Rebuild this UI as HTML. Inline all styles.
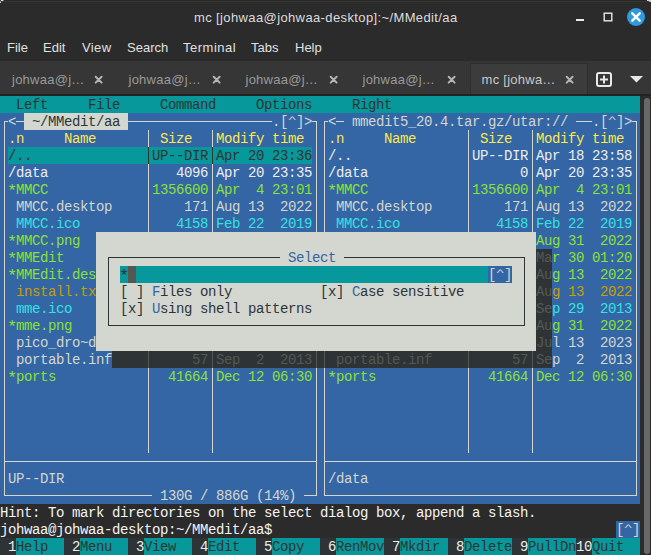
<!DOCTYPE html>
<html><head><meta charset="utf-8"><style>
html,body{margin:0;padding:0;width:651px;height:555px;overflow:hidden;background:#2b2b2b;position:relative}
.t{position:absolute;height:17px;line-height:17px;font-family:"Liberation Mono",monospace;font-size:14.0px;letter-spacing:-0.401px;white-space:pre;overflow:visible}
.l{position:absolute}
.c{display:inline-block;width:8px;transform-origin:50% 4px;transform:scale(1.05,0.5)}
.a{display:inline-block;width:8px;transform:translateY(1.6px) scale(1.22)}
.ui{position:absolute;font-family:"Liberation Sans",sans-serif;font-size:13px;white-space:pre;line-height:16px}
</style></head><body>

<div style="position:absolute;left:0;top:0;width:651px;height:61px;background:#2b2b2b"></div><div style="position:absolute;left:0;top:0;width:651px;height:1px;background:#292825"></div><div style="position:absolute;left:0;top:1px;width:651px;height:1px;background:#363636"></div><div style="position:absolute;left:0;top:0;width:2px;height:1px;background:#30305a"></div><div style="position:absolute;left:1px;top:0;width:2px;height:1px;background:#d8f0f8"></div><div style="position:absolute;left:3px;top:0;width:1px;height:1px;background:#a06030"></div><div style="position:absolute;left:0;top:1px;width:1px;height:1px;background:#c08050"></div><div style="position:absolute;left:0;top:2px;width:1px;height:1px;background:#d0d0d0"></div><div style="position:absolute;left:647px;top:0;width:4px;height:1px;background:#d8d0c0"></div><div style="position:absolute;left:649px;top:1px;width:2px;height:1px;background:#c0b8a8"></div>
<div class="ui" style="left:194px;top:10px;color:#dcdcdc;letter-spacing:0.38px">mc [johwaa@johwaa-desktop]:~/MMedit/aa</div>
<div style="position:absolute;left:576px;top:19px;width:8px;height:2px;background:#e8e8e8"></div>
<svg style="position:absolute;left:602px;top:11px" width="12" height="12"><rect x="2.2" y="2.2" width="7.6" height="7.6" fill="none" stroke="#e8e8e8" stroke-width="1.4"/></svg>
<div style="position:absolute;left:627px;top:8px;width:18px;height:18px;border-radius:50%;background:#2f9ade"></div>
<svg style="position:absolute;left:627px;top:8px" width="18" height="18"><path d="M5.3 5.3 L12.7 12.7 M12.7 5.3 L5.3 12.7" stroke="#fff" stroke-width="2.4" stroke-linecap="round"/></svg>
<div class="ui" style="left:7px;top:40px;color:#e0e0e0">File</div>
<div class="ui" style="left:43px;top:40px;color:#e0e0e0">Edit</div>
<div class="ui" style="left:82px;top:40px;color:#e0e0e0;letter-spacing:0.4px">View</div>
<div class="ui" style="left:127px;top:40px;color:#e0e0e0">Search</div>
<div class="ui" style="left:183px;top:40px;color:#e0e0e0;letter-spacing:0.5px">Terminal</div>
<div class="ui" style="left:251px;top:40px;color:#e0e0e0">Tabs</div>
<div class="ui" style="left:295px;top:40px;color:#e0e0e0">Help</div>
<div style="position:absolute;left:0;top:61px;width:651px;height:33px;background:#363636"></div>
<div style="position:absolute;left:470px;top:63px;width:118px;height:31px;background:#3c3c3c;border:1px solid #2e2e2e;border-bottom:none;box-sizing:border-box"></div>
<div style="position:absolute;left:0;top:94px;width:651px;height:2px;background:#232323"></div>
<div style="position:absolute;left:640px;top:96px;width:11px;height:459px;background:#2b2b2b"></div>
<div style="position:absolute;left:644px;top:98px;width:6px;height:456px;border-radius:3px;background:#686868"></div>

<div class="ui" style="left:12.0px;top:72px;color:#9a9a9a;letter-spacing:0.25px">johwaa@j…</div><svg style="position:absolute;left:94.2px;top:74.5px" width="10" height="10"><path d="M1.7 1.7 L7.6 7.6 M7.6 1.7 L1.7 7.6" stroke="#b4b4b4" stroke-width="2" stroke-linecap="round"/></svg><div class="ui" style="left:128.5px;top:72px;color:#9a9a9a;letter-spacing:0.25px">johwaa@j…</div><svg style="position:absolute;left:211.8px;top:74.5px" width="10" height="10"><path d="M1.7 1.7 L7.6 7.6 M7.6 1.7 L1.7 7.6" stroke="#b4b4b4" stroke-width="2" stroke-linecap="round"/></svg><div class="ui" style="left:245.5px;top:72px;color:#9a9a9a;letter-spacing:0.25px">johwaa@j…</div><svg style="position:absolute;left:329.4px;top:74.5px" width="10" height="10"><path d="M1.7 1.7 L7.6 7.6 M7.6 1.7 L1.7 7.6" stroke="#b4b4b4" stroke-width="2" stroke-linecap="round"/></svg><div class="ui" style="left:362.5px;top:72px;color:#9a9a9a;letter-spacing:0.25px">johwaa@j…</div><svg style="position:absolute;left:447.0px;top:74.5px" width="10" height="10"><path d="M1.7 1.7 L7.6 7.6 M7.6 1.7 L1.7 7.6" stroke="#b4b4b4" stroke-width="2" stroke-linecap="round"/></svg><div class="ui" style="left:481.6px;top:72px;color:#c8c8c8;letter-spacing:0.25px">mc [johwa…</div><svg style="position:absolute;left:564.6px;top:74.5px" width="10" height="10"><path d="M1.7 1.7 L7.6 7.6 M7.6 1.7 L1.7 7.6" stroke="#b4b4b4" stroke-width="2" stroke-linecap="round"/></svg><div style="position:absolute;left:596px;top:72px;width:12px;height:11px;border:2px solid #e8e8e8;border-radius:3px"></div><svg style="position:absolute;left:596px;top:72px" width="16" height="15"><path d="M8 3.5 V11.5 M4 7.5 H12" stroke="#e8e8e8" stroke-width="2"/></svg><svg style="position:absolute;left:630px;top:76px" width="13" height="7"><path d="M0 0 H13 L6.5 6.5 Z" fill="#e8e8e8"/></svg>
<div style="position:absolute;left:0;top:96px;width:640px;height:459px;background:#2b2b2b"></div>
<div class="t" style="left:0px;top:96px;width:640px;background:#06989a;color:#2e3436"><span style="position:relative;top:1.0px">  Left     File     Command     Options     Right</span></div>
<div class="t" style="left:0px;top:113px;width:24px;background:#3465a4;color:#d3d7cf"><span style="position:relative;top:1.0px"> &lt;</span></div>
<div class="t" style="left:24px;top:113px;width:104px;background:#d3d7cf;color:#2e3436"><span style="position:relative;top:1.0px"> ~/MMedit/aa</span></div>
<div class="t" style="left:128px;top:113px;width:512px;background:#3465a4;color:#d3d7cf"><span style="position:relative;top:1.0px">                  .[<span class="c">^</span>]&gt;  &lt;  mmedit5_20.4.tar.gz/utar://   .[<span class="c">^</span>]&gt;</span></div>
<div class="t" style="left:0px;top:130px;width:8px;background:#3465a4;color:#d3d7cf"></div>
<div class="t" style="left:8px;top:130px;width:16px;background:#3465a4;color:#fce94f"><span style="position:relative;top:1.0px">.n</span></div>
<div class="t" style="left:24px;top:130px;width:40px;background:#3465a4;color:#d3d7cf"></div>
<div class="t" style="left:64px;top:130px;width:32px;background:#3465a4;color:#fce94f"><span style="position:relative;top:1.0px">Name</span></div>
<div class="t" style="left:96px;top:130px;width:64px;background:#3465a4;color:#d3d7cf"></div>
<div class="t" style="left:160px;top:130px;width:32px;background:#3465a4;color:#fce94f"><span style="position:relative;top:1.0px">Size</span></div>
<div class="t" style="left:192px;top:130px;width:24px;background:#3465a4;color:#d3d7cf"></div>
<div class="t" style="left:216px;top:130px;width:88px;background:#3465a4;color:#fce94f"><span style="position:relative;top:1.0px">Modify time</span></div>
<div class="t" style="left:304px;top:130px;width:24px;background:#3465a4;color:#d3d7cf"></div>
<div class="t" style="left:328px;top:130px;width:16px;background:#3465a4;color:#fce94f"><span style="position:relative;top:1.0px">.n</span></div>
<div class="t" style="left:344px;top:130px;width:40px;background:#3465a4;color:#d3d7cf"></div>
<div class="t" style="left:384px;top:130px;width:32px;background:#3465a4;color:#fce94f"><span style="position:relative;top:1.0px">Name</span></div>
<div class="t" style="left:416px;top:130px;width:64px;background:#3465a4;color:#d3d7cf"></div>
<div class="t" style="left:480px;top:130px;width:32px;background:#3465a4;color:#fce94f"><span style="position:relative;top:1.0px">Size</span></div>
<div class="t" style="left:512px;top:130px;width:24px;background:#3465a4;color:#d3d7cf"></div>
<div class="t" style="left:536px;top:130px;width:88px;background:#3465a4;color:#fce94f"><span style="position:relative;top:1.0px">Modify time</span></div>
<div class="t" style="left:624px;top:130px;width:16px;background:#3465a4;color:#d3d7cf"></div>
<div class="t" style="left:0px;top:147px;width:8px;background:#3465a4;color:#d3d7cf"></div>
<div class="t" style="left:8px;top:147px;width:304px;background:#06989a;color:#2e3436"><span style="position:relative;top:1.0px">/..               UP--DIR Apr 20 23:36</span></div>
<div class="t" style="left:312px;top:147px;width:16px;background:#3465a4;color:#d3d7cf"></div>
<div class="t" style="left:328px;top:147px;width:136px;background:#3465a4;color:#eeeeec"><span style="position:relative;top:1.0px">/..</span></div>
<div class="t" style="left:464px;top:147px;width:8px;background:#3465a4;color:#d3d7cf"></div>
<div class="t" style="left:472px;top:147px;width:56px;background:#3465a4;color:#eeeeec"><span style="position:relative;top:1.0px">UP--DIR</span></div>
<div class="t" style="left:528px;top:147px;width:8px;background:#3465a4;color:#d3d7cf"></div>
<div class="t" style="left:536px;top:147px;width:96px;background:#3465a4;color:#eeeeec"><span style="position:relative;top:1.0px">Apr 18 23:58</span></div>
<div class="t" style="left:632px;top:147px;width:8px;background:#3465a4;color:#d3d7cf"></div>
<div class="t" style="left:0px;top:164px;width:8px;background:#3465a4;color:#d3d7cf"></div>
<div class="t" style="left:8px;top:164px;width:136px;background:#3465a4;color:#eeeeec"><span style="position:relative;top:1.0px">/data</span></div>
<div class="t" style="left:144px;top:164px;width:8px;background:#3465a4;color:#d3d7cf"></div>
<div class="t" style="left:152px;top:164px;width:56px;background:#3465a4;color:#eeeeec"><span style="position:relative;top:1.0px">   4096</span></div>
<div class="t" style="left:208px;top:164px;width:8px;background:#3465a4;color:#d3d7cf"></div>
<div class="t" style="left:216px;top:164px;width:96px;background:#3465a4;color:#eeeeec"><span style="position:relative;top:1.0px">Apr 20 23:35</span></div>
<div class="t" style="left:312px;top:164px;width:16px;background:#3465a4;color:#d3d7cf"></div>
<div class="t" style="left:328px;top:164px;width:136px;background:#3465a4;color:#eeeeec"><span style="position:relative;top:1.0px">/data</span></div>
<div class="t" style="left:464px;top:164px;width:8px;background:#3465a4;color:#d3d7cf"></div>
<div class="t" style="left:472px;top:164px;width:56px;background:#3465a4;color:#eeeeec"><span style="position:relative;top:1.0px">      0</span></div>
<div class="t" style="left:528px;top:164px;width:8px;background:#3465a4;color:#d3d7cf"></div>
<div class="t" style="left:536px;top:164px;width:96px;background:#3465a4;color:#eeeeec"><span style="position:relative;top:1.0px">Apr 20 23:35</span></div>
<div class="t" style="left:632px;top:164px;width:8px;background:#3465a4;color:#d3d7cf"></div>
<div class="t" style="left:0px;top:181px;width:8px;background:#3465a4;color:#d3d7cf"></div>
<div class="t" style="left:8px;top:181px;width:136px;background:#3465a4;color:#8ae234"><span style="position:relative;top:1.0px"><span class="a">*</span>MMCC</span></div>
<div class="t" style="left:144px;top:181px;width:8px;background:#3465a4;color:#d3d7cf"></div>
<div class="t" style="left:152px;top:181px;width:56px;background:#3465a4;color:#8ae234"><span style="position:relative;top:1.0px">1356600</span></div>
<div class="t" style="left:208px;top:181px;width:8px;background:#3465a4;color:#d3d7cf"></div>
<div class="t" style="left:216px;top:181px;width:96px;background:#3465a4;color:#8ae234"><span style="position:relative;top:1.0px">Apr  4 23:01</span></div>
<div class="t" style="left:312px;top:181px;width:16px;background:#3465a4;color:#d3d7cf"></div>
<div class="t" style="left:328px;top:181px;width:136px;background:#3465a4;color:#8ae234"><span style="position:relative;top:1.0px"><span class="a">*</span>MMCC</span></div>
<div class="t" style="left:464px;top:181px;width:8px;background:#3465a4;color:#d3d7cf"></div>
<div class="t" style="left:472px;top:181px;width:56px;background:#3465a4;color:#8ae234"><span style="position:relative;top:1.0px">1356600</span></div>
<div class="t" style="left:528px;top:181px;width:8px;background:#3465a4;color:#d3d7cf"></div>
<div class="t" style="left:536px;top:181px;width:96px;background:#3465a4;color:#8ae234"><span style="position:relative;top:1.0px">Apr  4 23:01</span></div>
<div class="t" style="left:632px;top:181px;width:8px;background:#3465a4;color:#d3d7cf"></div>
<div class="t" style="left:0px;top:198px;width:640px;background:#3465a4;color:#d3d7cf"><span style="position:relative;top:1.0px">  MMCC.desktop         171 Aug 13  2022   MMCC.desktop         171 Aug 13  2022</span></div>
<div class="t" style="left:0px;top:215px;width:8px;background:#3465a4;color:#d3d7cf"></div>
<div class="t" style="left:8px;top:215px;width:136px;background:#3465a4;color:#34e2e2"><span style="position:relative;top:1.0px"> MMCC.ico</span></div>
<div class="t" style="left:144px;top:215px;width:8px;background:#3465a4;color:#d3d7cf"></div>
<div class="t" style="left:152px;top:215px;width:56px;background:#3465a4;color:#34e2e2"><span style="position:relative;top:1.0px">   4158</span></div>
<div class="t" style="left:208px;top:215px;width:8px;background:#3465a4;color:#d3d7cf"></div>
<div class="t" style="left:216px;top:215px;width:96px;background:#3465a4;color:#34e2e2"><span style="position:relative;top:1.0px">Feb 22  2019</span></div>
<div class="t" style="left:312px;top:215px;width:16px;background:#3465a4;color:#d3d7cf"></div>
<div class="t" style="left:328px;top:215px;width:136px;background:#3465a4;color:#34e2e2"><span style="position:relative;top:1.0px"> MMCC.ico</span></div>
<div class="t" style="left:464px;top:215px;width:8px;background:#3465a4;color:#d3d7cf"></div>
<div class="t" style="left:472px;top:215px;width:56px;background:#3465a4;color:#34e2e2"><span style="position:relative;top:1.0px">   4158</span></div>
<div class="t" style="left:528px;top:215px;width:8px;background:#3465a4;color:#d3d7cf"></div>
<div class="t" style="left:536px;top:215px;width:96px;background:#3465a4;color:#34e2e2"><span style="position:relative;top:1.0px">Feb 22  2019</span></div>
<div class="t" style="left:632px;top:215px;width:8px;background:#3465a4;color:#d3d7cf"></div>
<div class="t" style="left:0px;top:232px;width:8px;background:#3465a4;color:#d3d7cf"></div>
<div class="t" style="left:8px;top:232px;width:88px;background:#3465a4;color:#8ae234"><span style="position:relative;top:1.0px"><span class="a">*</span>MMCC.png</span></div>
<div class="t" style="left:96px;top:232px;width:440px;background:#d3d7cf;color:#2e3436"></div>
<div class="t" style="left:536px;top:232px;width:96px;background:#3465a4;color:#8ae234"><span style="position:relative;top:1.0px">Aug 31  2022</span></div>
<div class="t" style="left:632px;top:232px;width:8px;background:#3465a4;color:#d3d7cf"></div>
<div class="t" style="left:0px;top:249px;width:8px;background:#3465a4;color:#d3d7cf"></div>
<div class="t" style="left:8px;top:249px;width:88px;background:#3465a4;color:#8ae234"><span style="position:relative;top:1.0px"><span class="a">*</span>MMEdit</span></div>
<div class="t" style="left:96px;top:249px;width:184px;background:#d3d7cf;color:#2e3436"></div>
<div class="t" style="left:280px;top:249px;width:64px;background:#d3d7cf;color:#3465a4"><span style="position:relative;top:1.0px"> Select</span></div>
<div class="t" style="left:344px;top:249px;width:192px;background:#d3d7cf;color:#2e3436"></div>
<div class="t" style="left:536px;top:249px;width:16px;background:#2e3436;color:#555753"><span style="position:relative;top:1.0px">Ma</span></div>
<div class="t" style="left:552px;top:249px;width:80px;background:#3465a4;color:#8ae234"><span style="position:relative;top:1.0px">r 30 01:20</span></div>
<div class="t" style="left:632px;top:249px;width:8px;background:#3465a4;color:#d3d7cf"></div>
<div class="t" style="left:0px;top:266px;width:8px;background:#3465a4;color:#d3d7cf"></div>
<div class="t" style="left:8px;top:266px;width:88px;background:#3465a4;color:#8ae234"><span style="position:relative;top:1.0px"><span class="a">*</span>MMEdit.des</span></div>
<div class="t" style="left:96px;top:266px;width:24px;background:#d3d7cf;color:#2e3436"></div>
<div class="t" style="left:120px;top:266px;width:8px;background:#06989a;color:#2e3436"><span style="position:relative;top:1.0px"><span class="a">*</span></span></div>
<div class="t" style="left:128px;top:266px;width:8px;background:#555753;color:#2e3436"></div>
<div class="t" style="left:136px;top:266px;width:352px;background:#06989a;color:#2e3436"></div>
<div class="t" style="left:488px;top:266px;width:24px;background:#3465a4;color:#d3d7cf"><span style="position:relative;top:1.0px">[<span class="c">^</span>]</span></div>
<div class="t" style="left:512px;top:266px;width:24px;background:#d3d7cf;color:#2e3436"></div>
<div class="t" style="left:536px;top:266px;width:16px;background:#2e3436;color:#555753"><span style="position:relative;top:1.0px">Au</span></div>
<div class="t" style="left:552px;top:266px;width:80px;background:#3465a4;color:#8ae234"><span style="position:relative;top:1.0px">g 13  2022</span></div>
<div class="t" style="left:632px;top:266px;width:8px;background:#3465a4;color:#d3d7cf"></div>
<div class="t" style="left:0px;top:283px;width:8px;background:#3465a4;color:#d3d7cf"></div>
<div class="t" style="left:8px;top:283px;width:88px;background:#3465a4;color:#c4a000"><span style="position:relative;top:1.0px"> install.tx</span></div>
<div class="t" style="left:96px;top:283px;width:56px;background:#d3d7cf;color:#2e3436"><span style="position:relative;top:1.0px">   [ ]</span></div>
<div class="t" style="left:152px;top:283px;width:8px;background:#d3d7cf;color:#3465a4"><span style="position:relative;top:1.0px">F</span></div>
<div class="t" style="left:160px;top:283px;width:192px;background:#d3d7cf;color:#2e3436"><span style="position:relative;top:1.0px">iles only           [x]</span></div>
<div class="t" style="left:352px;top:283px;width:8px;background:#d3d7cf;color:#3465a4"><span style="position:relative;top:1.0px">C</span></div>
<div class="t" style="left:360px;top:283px;width:176px;background:#d3d7cf;color:#2e3436"><span style="position:relative;top:1.0px">ase sensitive</span></div>
<div class="t" style="left:536px;top:283px;width:16px;background:#2e3436;color:#555753"><span style="position:relative;top:1.0px">Au</span></div>
<div class="t" style="left:552px;top:283px;width:80px;background:#3465a4;color:#c4a000"><span style="position:relative;top:1.0px">g 13  2022</span></div>
<div class="t" style="left:632px;top:283px;width:8px;background:#3465a4;color:#d3d7cf"></div>
<div class="t" style="left:0px;top:300px;width:8px;background:#3465a4;color:#d3d7cf"></div>
<div class="t" style="left:8px;top:300px;width:88px;background:#3465a4;color:#34e2e2"><span style="position:relative;top:1.0px"> mme.ico</span></div>
<div class="t" style="left:96px;top:300px;width:56px;background:#d3d7cf;color:#2e3436"><span style="position:relative;top:1.0px">   [x]</span></div>
<div class="t" style="left:152px;top:300px;width:8px;background:#d3d7cf;color:#3465a4"><span style="position:relative;top:1.0px">U</span></div>
<div class="t" style="left:160px;top:300px;width:376px;background:#d3d7cf;color:#2e3436"><span style="position:relative;top:1.0px">sing shell patterns</span></div>
<div class="t" style="left:536px;top:300px;width:16px;background:#2e3436;color:#555753"><span style="position:relative;top:1.0px">Se</span></div>
<div class="t" style="left:552px;top:300px;width:80px;background:#3465a4;color:#34e2e2"><span style="position:relative;top:1.0px">p 29  2013</span></div>
<div class="t" style="left:632px;top:300px;width:8px;background:#3465a4;color:#d3d7cf"></div>
<div class="t" style="left:0px;top:317px;width:8px;background:#3465a4;color:#d3d7cf"></div>
<div class="t" style="left:8px;top:317px;width:88px;background:#3465a4;color:#8ae234"><span style="position:relative;top:1.0px"><span class="a">*</span>mme.png</span></div>
<div class="t" style="left:96px;top:317px;width:440px;background:#d3d7cf;color:#2e3436"></div>
<div class="t" style="left:536px;top:317px;width:16px;background:#2e3436;color:#555753"><span style="position:relative;top:1.0px">Au</span></div>
<div class="t" style="left:552px;top:317px;width:80px;background:#3465a4;color:#8ae234"><span style="position:relative;top:1.0px">g 31  2022</span></div>
<div class="t" style="left:632px;top:317px;width:8px;background:#3465a4;color:#d3d7cf"></div>
<div class="t" style="left:0px;top:334px;width:96px;background:#3465a4;color:#d3d7cf"><span style="position:relative;top:1.0px">  pico_dro~d</span></div>
<div class="t" style="left:96px;top:334px;width:440px;background:#d3d7cf;color:#2e3436"></div>
<div class="t" style="left:536px;top:334px;width:16px;background:#2e3436;color:#555753"><span style="position:relative;top:1.0px">Ju</span></div>
<div class="t" style="left:552px;top:334px;width:88px;background:#3465a4;color:#d3d7cf"><span style="position:relative;top:1.0px">l 13  2023</span></div>
<div class="t" style="left:0px;top:351px;width:112px;background:#3465a4;color:#d3d7cf"><span style="position:relative;top:1.0px">  portable.inf</span></div>
<div class="t" style="left:112px;top:351px;width:440px;background:#2e3436;color:#555753"><span style="position:relative;top:1.0px">          57 Sep  2  2013   portable.inf          57 Se</span></div>
<div class="t" style="left:552px;top:351px;width:88px;background:#3465a4;color:#d3d7cf"><span style="position:relative;top:1.0px">p  2  2013</span></div>
<div class="t" style="left:0px;top:368px;width:8px;background:#3465a4;color:#d3d7cf"></div>
<div class="t" style="left:8px;top:368px;width:136px;background:#3465a4;color:#8ae234"><span style="position:relative;top:1.0px"><span class="a">*</span>ports</span></div>
<div class="t" style="left:144px;top:368px;width:8px;background:#3465a4;color:#d3d7cf"></div>
<div class="t" style="left:152px;top:368px;width:56px;background:#3465a4;color:#8ae234"><span style="position:relative;top:1.0px">  41664</span></div>
<div class="t" style="left:208px;top:368px;width:8px;background:#3465a4;color:#d3d7cf"></div>
<div class="t" style="left:216px;top:368px;width:96px;background:#3465a4;color:#8ae234"><span style="position:relative;top:1.0px">Dec 12 06:30</span></div>
<div class="t" style="left:312px;top:368px;width:16px;background:#3465a4;color:#d3d7cf"></div>
<div class="t" style="left:328px;top:368px;width:136px;background:#3465a4;color:#8ae234"><span style="position:relative;top:1.0px"><span class="a">*</span>ports</span></div>
<div class="t" style="left:464px;top:368px;width:8px;background:#3465a4;color:#d3d7cf"></div>
<div class="t" style="left:472px;top:368px;width:56px;background:#3465a4;color:#8ae234"><span style="position:relative;top:1.0px">  41664</span></div>
<div class="t" style="left:528px;top:368px;width:8px;background:#3465a4;color:#d3d7cf"></div>
<div class="t" style="left:536px;top:368px;width:96px;background:#3465a4;color:#8ae234"><span style="position:relative;top:1.0px">Dec 12 06:30</span></div>
<div class="t" style="left:632px;top:368px;width:8px;background:#3465a4;color:#d3d7cf"></div>
<div class="t" style="left:0px;top:385px;width:640px;background:#3465a4;color:#d3d7cf"></div>
<div class="t" style="left:0px;top:402px;width:640px;background:#3465a4;color:#d3d7cf"></div>
<div class="t" style="left:0px;top:419px;width:640px;background:#3465a4;color:#d3d7cf"></div>
<div class="t" style="left:0px;top:436px;width:640px;background:#3465a4;color:#d3d7cf"></div>
<div class="t" style="left:0px;top:453px;width:640px;background:#3465a4;color:#d3d7cf"></div>
<div class="t" style="left:0px;top:470px;width:640px;background:#3465a4;color:#d3d7cf"><span style="position:relative;top:1.0px"> UP--DIR                                 /data</span></div>
<div class="t" style="left:0px;top:487px;width:640px;background:#3465a4;color:#d3d7cf"><span style="position:relative;top:1.0px">                    130G / 886G (14%)</span></div>
<div class="t" style="left:0px;top:504px;width:640px;background:#2b2b2b;color:#f4f4f4"><span style="position:relative;top:1.0px">Hint: To mark directories on the select dialog box, append a slash.</span></div>
<div class="t" style="left:0px;top:521px;width:616px;background:#2b2b2b;color:#f4f4f4"><span style="position:relative;top:1.0px">johwaa@johwaa-desktop:~/MMedit/aa$</span></div>
<div class="t" style="left:616px;top:521px;width:24px;background:#3465a4;color:#d3d7cf"><span style="position:relative;top:1.0px">[<span class="c">^</span>]</span></div>
<div class="t" style="left:0px;top:538px;width:16px;background:#2e3436;color:#eeeeec"><span style="position:relative;top:1.0px"> 1</span></div>
<div class="t" style="left:16px;top:538px;width:48px;background:#06989a;color:#2e3436"><span style="position:relative;top:1.0px">Help</span></div>
<div class="t" style="left:64px;top:538px;width:16px;background:#2e3436;color:#eeeeec"><span style="position:relative;top:1.0px"> 2</span></div>
<div class="t" style="left:80px;top:538px;width:48px;background:#06989a;color:#2e3436"><span style="position:relative;top:1.0px">Menu</span></div>
<div class="t" style="left:128px;top:538px;width:16px;background:#2e3436;color:#eeeeec"><span style="position:relative;top:1.0px"> 3</span></div>
<div class="t" style="left:144px;top:538px;width:48px;background:#06989a;color:#2e3436"><span style="position:relative;top:1.0px">View</span></div>
<div class="t" style="left:192px;top:538px;width:16px;background:#2e3436;color:#eeeeec"><span style="position:relative;top:1.0px"> 4</span></div>
<div class="t" style="left:208px;top:538px;width:48px;background:#06989a;color:#2e3436"><span style="position:relative;top:1.0px">Edit</span></div>
<div class="t" style="left:256px;top:538px;width:16px;background:#2e3436;color:#eeeeec"><span style="position:relative;top:1.0px"> 5</span></div>
<div class="t" style="left:272px;top:538px;width:48px;background:#06989a;color:#2e3436"><span style="position:relative;top:1.0px">Copy</span></div>
<div class="t" style="left:320px;top:538px;width:16px;background:#2e3436;color:#eeeeec"><span style="position:relative;top:1.0px"> 6</span></div>
<div class="t" style="left:336px;top:538px;width:48px;background:#06989a;color:#2e3436"><span style="position:relative;top:1.0px">RenMov</span></div>
<div class="t" style="left:384px;top:538px;width:16px;background:#2e3436;color:#eeeeec"><span style="position:relative;top:1.0px"> 7</span></div>
<div class="t" style="left:400px;top:538px;width:48px;background:#06989a;color:#2e3436"><span style="position:relative;top:1.0px">Mkdir</span></div>
<div class="t" style="left:448px;top:538px;width:16px;background:#2e3436;color:#eeeeec"><span style="position:relative;top:1.0px"> 8</span></div>
<div class="t" style="left:464px;top:538px;width:48px;background:#06989a;color:#2e3436"><span style="position:relative;top:1.0px">Delete</span></div>
<div class="t" style="left:512px;top:538px;width:16px;background:#2e3436;color:#eeeeec"><span style="position:relative;top:1.0px"> 9</span></div>
<div class="t" style="left:528px;top:538px;width:48px;background:#06989a;color:#2e3436"><span style="position:relative;top:1.0px">PullDn</span></div>
<div class="t" style="left:576px;top:538px;width:16px;background:#2e3436;color:#eeeeec"><span style="position:relative;top:1.0px">10</span></div>
<div class="t" style="left:592px;top:538px;width:48px;background:#06989a;color:#2e3436"><span style="position:relative;top:1.0px">Quit</span></div>
<div class="l" style="left:4px;top:121px;width:4px;height:1px;background:#d3d7cf"></div>
<div class="l" style="left:16px;top:121px;width:8px;height:1px;background:#d3d7cf"></div>
<div class="l" style="left:128px;top:121px;width:144px;height:1px;background:#d3d7cf"></div>
<div class="l" style="left:312px;top:121px;width:5px;height:1px;background:#d3d7cf"></div>
<div class="l" style="left:324px;top:121px;width:4px;height:1px;background:#d3d7cf"></div>
<div class="l" style="left:336px;top:121px;width:8px;height:1px;background:#d3d7cf"></div>
<div class="l" style="left:576px;top:121px;width:16px;height:1px;background:#d3d7cf"></div>
<div class="l" style="left:632px;top:121px;width:5px;height:1px;background:#d3d7cf"></div>
<div class="l" style="left:108px;top:257px;width:172px;height:1px;background:#2e3436"></div>
<div class="l" style="left:344px;top:257px;width:181px;height:1px;background:#2e3436"></div>
<div class="l" style="left:108px;top:325px;width:417px;height:1px;background:#2e3436"></div>
<div class="l" style="left:4px;top:461px;width:313px;height:1px;background:#d3d7cf"></div>
<div class="l" style="left:324px;top:461px;width:313px;height:1px;background:#d3d7cf"></div>
<div class="l" style="left:4px;top:495px;width:148px;height:1px;background:#d3d7cf"></div>
<div class="l" style="left:304px;top:495px;width:13px;height:1px;background:#d3d7cf"></div>
<div class="l" style="left:324px;top:495px;width:313px;height:1px;background:#d3d7cf"></div>
<div class="l" style="left:4px;top:121px;width:1px;height:375px;background:#d3d7cf"></div>
<div class="l" style="left:316px;top:121px;width:1px;height:111px;background:#d3d7cf"></div>
<div class="l" style="left:316px;top:351px;width:1px;height:17px;background:#555753"></div>
<div class="l" style="left:316px;top:368px;width:1px;height:128px;background:#d3d7cf"></div>
<div class="l" style="left:324px;top:121px;width:1px;height:111px;background:#d3d7cf"></div>
<div class="l" style="left:324px;top:351px;width:1px;height:17px;background:#555753"></div>
<div class="l" style="left:324px;top:368px;width:1px;height:128px;background:#d3d7cf"></div>
<div class="l" style="left:636px;top:121px;width:1px;height:375px;background:#d3d7cf"></div>
<div class="l" style="left:148px;top:130px;width:1px;height:17px;background:#d3d7cf"></div>
<div class="l" style="left:148px;top:147px;width:1px;height:17px;background:#2e3436"></div>
<div class="l" style="left:148px;top:164px;width:1px;height:68px;background:#d3d7cf"></div>
<div class="l" style="left:148px;top:351px;width:1px;height:17px;background:#555753"></div>
<div class="l" style="left:148px;top:368px;width:1px;height:85px;background:#d3d7cf"></div>
<div class="l" style="left:212px;top:130px;width:1px;height:17px;background:#d3d7cf"></div>
<div class="l" style="left:212px;top:147px;width:1px;height:17px;background:#2e3436"></div>
<div class="l" style="left:212px;top:164px;width:1px;height:68px;background:#d3d7cf"></div>
<div class="l" style="left:212px;top:351px;width:1px;height:17px;background:#555753"></div>
<div class="l" style="left:212px;top:368px;width:1px;height:85px;background:#d3d7cf"></div>
<div class="l" style="left:468px;top:130px;width:1px;height:102px;background:#d3d7cf"></div>
<div class="l" style="left:468px;top:351px;width:1px;height:17px;background:#555753"></div>
<div class="l" style="left:468px;top:368px;width:1px;height:85px;background:#d3d7cf"></div>
<div class="l" style="left:532px;top:130px;width:1px;height:102px;background:#d3d7cf"></div>
<div class="l" style="left:532px;top:351px;width:1px;height:17px;background:#555753"></div>
<div class="l" style="left:532px;top:368px;width:1px;height:85px;background:#d3d7cf"></div>
<div class="l" style="left:108px;top:257px;width:1px;height:69px;background:#2e3436"></div>
<div class="l" style="left:524px;top:257px;width:1px;height:69px;background:#2e3436"></div>
</body></html>
